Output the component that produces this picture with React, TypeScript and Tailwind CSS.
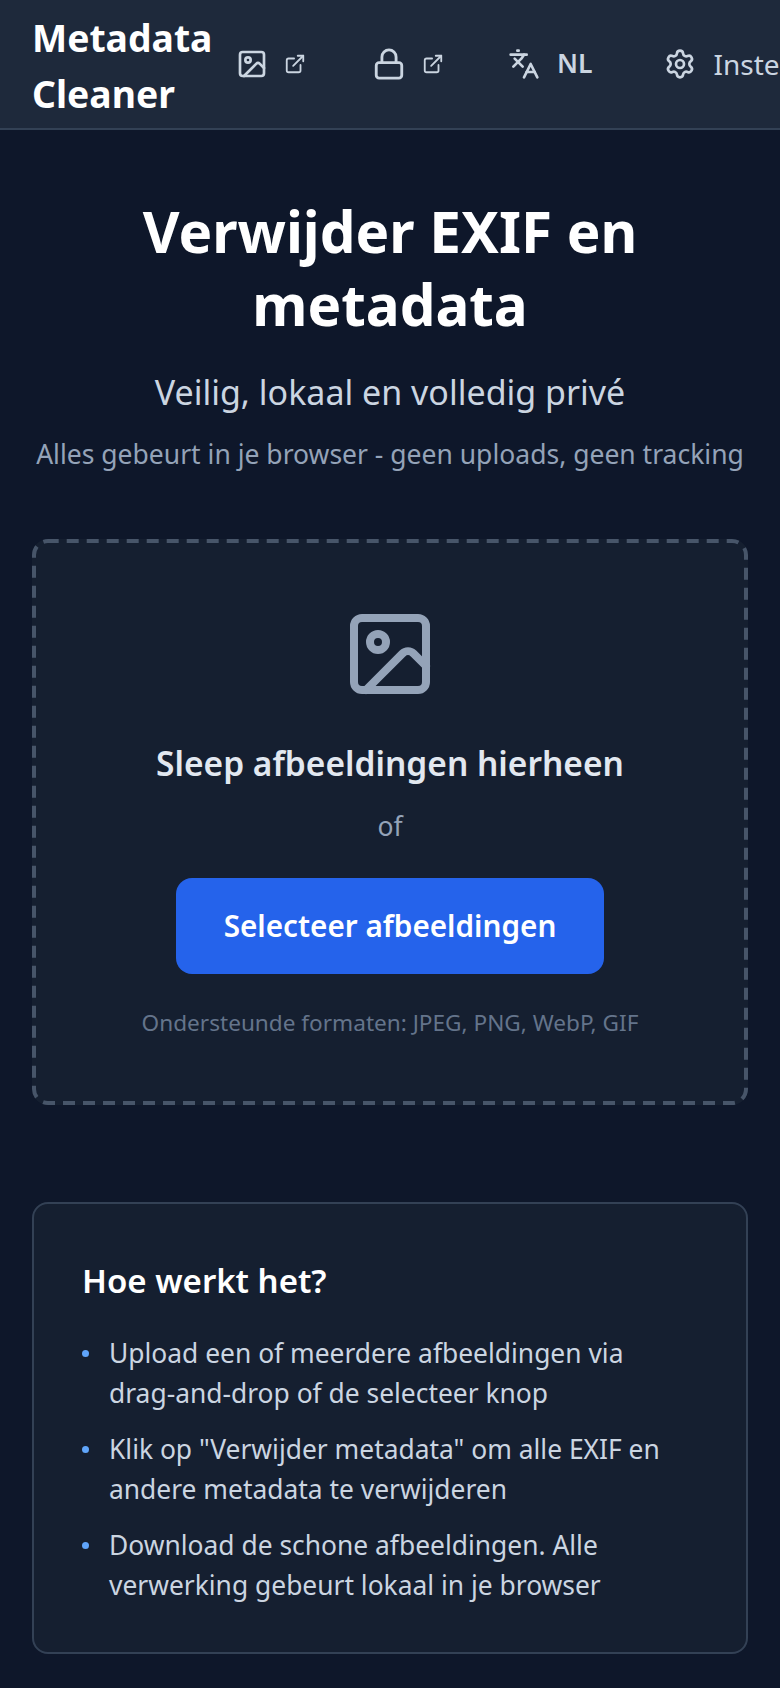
import { Image, ExternalLink, Lock, Languages, Settings } from "lucide-react";

const steps = [
  <>Upload een of meerdere afbeeldingen via<br />drag-and-drop of de selecteer knop</>,
  <>Klik op "Verwijder metadata" om alle EXIF en<br />andere metadata te verwijderen</>,
  <>Download de schone afbeeldingen. Alle<br />verwerking gebeurt lokaal in je browser</>,
];

export default function App() {
  return (
    <div className="h-[1688px] w-[780px] overflow-hidden bg-[#0e172a] font-['Noto_Sans',sans-serif]">
      <header className="flex h-[130px] items-center overflow-hidden border-b-2 border-[#334155] bg-[#1e293b] px-8">
        <h1 className="w-[184px] shrink-0 pt-[4px] text-[37.3px] leading-[56px] font-bold text-white">Metadata Cleaner</h1>
        <nav className="ml-[20px] flex shrink-0 items-center text-[#cbd5e1]">
          <Image size={32} strokeWidth={2} />
          <ExternalLink size={22} strokeWidth={2} className="ml-[16px]" />
          <Lock size={34} strokeWidth={2} className="ml-[66px]" />
          <ExternalLink size={22} strokeWidth={2} className="ml-[16px]" />
          <Languages size={32} strokeWidth={2} className="ml-[64px]" />
          <span className="ml-[17px] text-[26.5px] font-semibold">NL</span>
          <Settings size={32} strokeWidth={2} className="ml-[72px]" />
          <span className="ml-[17px] text-[28px]">Instellingen</span>
        </nav>
      </header>
      <main className="px-8 pt-[65px]">
        <h2 className="text-center text-[56.6px] leading-[73px] font-bold text-white">Verwijder EXIF en<br />metadata</h2>
        <p className="mt-[23px] text-center text-[34px] leading-[56px] text-[#cbd5e1]">Veilig, lokaal en volledig privé</p>
        <p className="mt-[14px] whitespace-nowrap text-center text-[26.5px] leading-[40px] text-[#94a3b8]">Alles gebeurt in je browser - geen uploads, geen tracking</p>
        <section className="relative mt-[65px] flex h-[566px] flex-col items-center rounded-2xl bg-[#151f30] pt-[67px]">
          <svg className="absolute inset-0" width="716" height="566" fill="none">
            <rect x="2" y="2" width="712" height="562" rx="14" stroke="#475569" strokeWidth="4" strokeDasharray="12 8" strokeDashoffset="1.3" />
          </svg>
          <Image size={96} strokeWidth={2} className="text-[#94a3b8]" />
          <h3 className="mt-[33px] text-[33.5px] leading-[56px] font-semibold text-[#e2e8f0]">Sleep afbeeldingen hierheen</h3>
          <p className="mt-[15px] text-[26.5px] leading-[40px] text-[#94a3b8]">of</p>
          <button className="mt-[32px] h-[96px] w-[428px] rounded-2xl bg-[#2563eb] text-[29.7px] font-semibold text-white">Selecteer afbeeldingen</button>
          <p className="mt-[33px] text-[22.6px] leading-[32px] text-[#64748b]">Ondersteunde formaten: JPEG, PNG, WebP, GIF</p>
        </section>
        <section className="mt-[97px] rounded-2xl border-2 border-[#334155] bg-[#151f30] px-12 pt-[49px] pb-[47px]">
          <h3 className="text-[33px] leading-[56px] font-semibold text-white">Hoe werkt het?</h3>
          <ul className="mt-6 flex flex-col gap-[16px]">
            {steps.map((s, i) => (
              <li key={i} className="flex text-[26.4px] leading-[40px] text-[#cbd5e1]">
                <span className="mt-[17px] mr-5 h-[7px] w-[7px] shrink-0 rounded-full bg-[#60a5fa]" />
                <span>{s}</span>
              </li>
            ))}
          </ul>
        </section>
      </main>
    </div>
  );
}
